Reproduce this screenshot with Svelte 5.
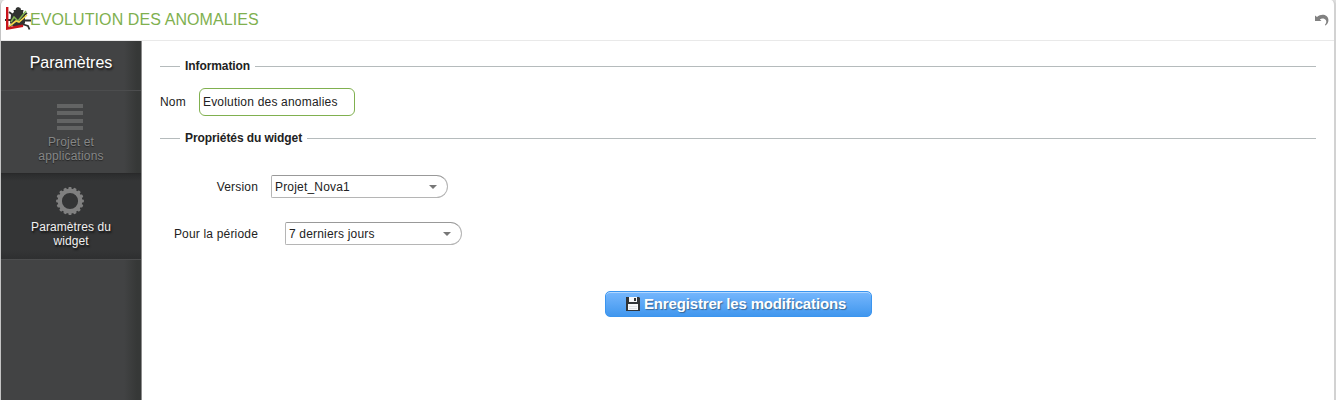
<script>
  let name = $state('Evolution des anomalies');
  const teeth = Array.from({ length: 16 }, (_, i) => i * 22.5);
  const fields = [
    { label: 'Version', value: 'Projet_Nova1', gap: 13 },
    { label: 'Pour la période', value: '7 derniers jours', gap: 27 }
  ];
</script>

<div class="window">
  <header>
    <svg class="logo" width="26" height="24" viewBox="0 0 26 24">
      <g fill="none" stroke="#303230" stroke-width="1.8">
        <path d="M8 8L4 5M7 13H0M8 17L4 20M18 9l4-3M18 13.500h8M17 17l6 2 1.500 3.500" />
      </g>
      <path fill="#303230" d="M9 5L8.500 3h2l.5-2L13 0l2.500 1 .5 2h2.500L18 5.500l2 3V16l-3 4H9l-4-4 1-8z" />
      <path fill="none" stroke="#82b550" stroke-width="1.500" d="M6 15l3-5 4 4 8-10" />
      <path fill="none" stroke="#f2d64b" stroke-width="1.600" d="M4 19.500l7-5.500 3 1 8-7" />
      <path fill="none" stroke="#c8141b" stroke-width="2.400" d="M2.200 0v21.500L18 18.800" />
    </svg>
    <h1>EVOLUTION DES ANOMALIES</h1>
    <svg class="undo" width="15" height="14" viewBox="0 0 15 14">
      <path fill="#818181" d="M0 1.500L2 3C5 .2 9 0 11.500 2c3 2.400 2.400 7.500-1 9.500l-.7-.6C12 8.800 11.800 6 9.500 5 7.800 4.200 6 4.600 4.800 5.500L6.500 7H0z" />
    </svg>
  </header>
  <div class="body">
    <nav>
      <h2>Paramètres</h2>
      <div class="item">
        <svg width="26" height="26" viewBox="0 0 26 26">
          <path fill="#636464" d="M0 0h26v4H0zM0 7h26v4H0zM0 15h26v4H0zM0 22h26v4H0z" />
        </svg>
        <span>Projet et applications</span>
      </div>
      <div class="item active">
        <svg width="28" height="28" viewBox="-14 -14 28 28">
          <circle r="10.200" fill="none" stroke="#808080" stroke-width="4.200" />
          {#each teeth as angle}
            <rect x="-1.600" y="-13.900" width="3.200" height="4" rx="1" fill="#808080" transform="rotate({angle})" />
          {/each}
        </svg>
        <span>Paramètres du widget</span>
      </div>
    </nav>
    <main>
      <div class="legend"><b>Information</b></div>
      <label class="name">Nom <input bind:value={name} /></label>
      <div class="legend second"><b>Propriétés du widget</b></div>
      <div class="fields">
        {#each fields as field}
          <div class="field">
            <span class="label">{field.label}</span>
            <div class="select" style="margin-left: {field.gap}px">
              {field.value}
              <svg width="8" height="4" viewBox="0 0 8 4"><path fill="#777" d="M0 0h8L4 4z" /></svg>
            </div>
          </div>
        {/each}
      </div>
      <button>
        <svg width="14" height="14" viewBox="0 0 14 14">
          <path fill="#303438" d="M0 0h13l1 1v13H0z" />
          <path fill="#f6f8fa" d="M3 0h8v5H3zM2 7h10v6H2z" />
          <path fill="#303438" d="M8 1h2v3H8z" />
          <path fill="#dfe2e5" d="M3 9h8v1H3zM3 11h8v1H3z" />
        </svg>
        <span>Enregistrer les modifications</span>
      </button>
    </main>
  </div>
</div>

<style>
  :global(body) {
    background: #dedede;
    overflow: hidden;
  }
  .window {
    box-sizing: border-box;
    height: 400px;
    border-left: 1px solid #c4c4c4;
    border-right: 2px solid #d2d2d2;
    border-radius: 5px 5px 0 0;
    background: #fff;
    overflow: hidden;
    font: 12px/14px 'Liberation Sans', Arial, sans-serif;
    color: #222;
  }
  header {
    box-sizing: border-box;
    height: 41px;
    display: flex;
    align-items: flex-start;
    border-bottom: 1px solid #e9e9e9;
    padding: 7px 4px 0 4px;
  }
  .logo {
    flex: none;
    margin-right: -1px;
  }
  h1 {
    margin: 4px 0 0;
    font-size: 16px;
    line-height: 18px;
    font-weight: 400;
    letter-spacing: 0.09px;
    color: #80b04f;
    flex: 1;
  }
  .undo {
    margin-top: 7px;
  }
  .body {
    display: flex;
    height: 359px;
  }
  nav {
    box-sizing: border-box;
    flex: none;
    width: 141px;
    border-right: 1px solid #8c8c8c;
    background: linear-gradient(90deg, #424344 0 123px, #363837 136px);
    color: #fff;
  }
  h2 {
    box-sizing: border-box;
    height: 50px;
    margin: 0;
    padding-top: 12px;
    border-bottom: 1px solid #4c4d4e;
    font-size: 16px;
    line-height: 19px;
    font-weight: 400;
    text-align: center;
    text-shadow: 1px 2px 2px #171717;
  }
  .item {
    box-sizing: border-box;
    height: 83px;
    display: flex;
    flex-direction: column;
    align-items: center;
    padding-top: 13px;
    border-bottom: 1px solid #29292a;
    color: #858686;
    letter-spacing: 0.16px;
    text-align: center;
    text-shadow: 0 1px 1px #252525;
  }
  .item svg {
    flex: none;
    margin-right: 2px;
  }
  .item span {
    width: 90px;
    margin-top: 5px;
  }
  .item.active {
    height: 86px;
    background: linear-gradient(#2b2c2d, #343536 7px, #343536 76px, #2e2f30);
    color: #f0f0f0;
    border-color: #4c4d4e;
    letter-spacing: 0.09px;
    text-shadow: 1px 2px 2px #111;
  }
  main {
    flex: 1;
    padding: 18px 18px 0;
    display: flex;
    flex-direction: column;
  }
  .legend {
    display: flex;
    height: 14px;
    align-items: center;
    gap: 5px;
    letter-spacing: -0.08px;
  }
  .legend::before,
  .legend::after {
    content: '';
    height: 1px;
    background: #b5bbbc;
    width: 20px;
  }
  .legend::after {
    flex: 1;
  }
  .name {
    display: flex;
    align-items: center;
    gap: 13px;
    margin-top: 15px;
    letter-spacing: 0.2px;
  }
  input {
    box-sizing: border-box;
    width: 156px;
    height: 28px;
    padding: 0 3px;
    border: 1px solid #80b04f;
    border-radius: 6px;
    font: inherit;
    letter-spacing: 0.2px;
    color: inherit;
    background: #fff;
    outline: none;
  }
  .second {
    margin-top: 15px;
  }
  .fields {
    display: flex;
    flex-direction: column;
    gap: 24px;
    margin-top: 30px;
    letter-spacing: 0.18px;
  }
  .field {
    display: flex;
    align-items: center;
  }
  .label {
    width: 98px;
    text-align: right;
  }
  .select {
    box-sizing: border-box;
    width: 177px;
    height: 23px;
    padding: 0 10px 0 3px;
    display: flex;
    align-items: center;
    justify-content: space-between;
    border: 1px solid #b5b5b5;
    border-top-color: #999;
    border-radius: 2px 12px 12px 2px;
  }
  button {
    box-sizing: border-box;
    align-self: center;
    width: 267px;
    height: 26px;
    margin: 46px 0 0 1px;
    padding: 0 0 1px 20px;
    display: flex;
    align-items: center;
    gap: 4px;
    border: 1px solid #3b95ef;
    border-radius: 5px;
    background: linear-gradient(#76b7fd, #4197ee);
    box-shadow: inset 0 1px 0 #b2d7ff;
    color: #fff;
    font: bold 15px/17px 'Liberation Sans', Arial, sans-serif;
    letter-spacing: -0.16px;
    text-shadow: 1px 1px 1px #386796;
  }
</style>
